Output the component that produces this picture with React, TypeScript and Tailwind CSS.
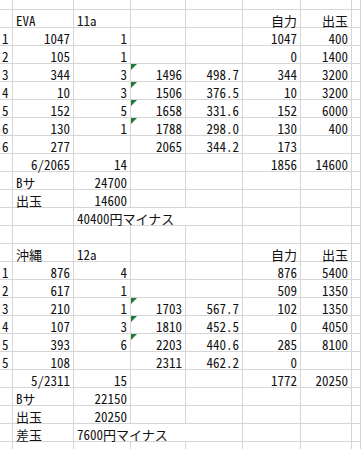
import React from 'react';

// null = covered by the cell on its left (text overflowing into the next column)
const rows: (string | null)[][] = [
  ['', 'EVA', '11a', '', '', '自力', '出玉'],
  ['1', '1047', '1', '', '', '1047', '400'],
  ['2', '105', '1', '', '', '0', '1400'],
  ['3', '344', '3', '1496', '498.7', '344', '3200'],
  ['4', '10', '3', '1506', '376.5', '10', '3200'],
  ['5', '152', '5', '1658', '331.6', '152', '6000'],
  ['6', '130', '1', '1788', '298.0', '130', '400'],
  ['6', '277', '', '2065', '344.2', '173', ''],
  ['', '6/2065', '14', '', '', '1856', '14600'],
  ['', 'Bサ', '24700', '', '', '', ''],
  ['', '出玉', '14600', '', '', '', ''],
  ['', '', '40400円マイナス', null, '', '', ''],
  ['', '', '', '', '', '', ''],
  ['', '沖縄', '12a', '', '', '自力', '出玉'],
  ['1', '876', '4', '', '', '876', '5400'],
  ['2', '617', '1', '', '', '509', '1350'],
  ['3', '210', '1', '1703', '567.7', '102', '1350'],
  ['4', '107', '3', '1810', '452.5', '0', '4050'],
  ['5', '393', '6', '2203', '440.6', '285', '8100'],
  ['5', '108', '', '2311', '462.2', '0', ''],
  ['', '5/2311', '15', '', '', '1772', '20250'],
  ['', 'Bサ', '22150', '', '', '', ''],
  ['', '出玉', '20250', '', '', '', ''],
  ['', '差玉', '7600円マイナス', null, '', '', ''],
];

// rows whose D cell carries the green "number stored as text" marker
const flagged = new Set([3, 4, 5, 6, 16, 17, 18]);

function alignOf(col: number, text: string) {
  if (col === 0) return 'justify-start pl-[2px]';
  if (/^[\d./]+$/.test(text)) return 'justify-end pr-[3px]';
  if (col >= 5) return 'justify-end pr-[3px]';
  return 'justify-start pl-[3px]';
}

function EmptyRow({ h }: { h: string }) {
  return (
    <>
      {Array.from({ length: 8 }).map((_, i) => (
        <div key={i} className={`${h} border-r border-b border-[#d6d6d6]`} />
      ))}
    </>
  );
}

export default function App() {
  return (
    <div className="w-[361px] h-[449px] overflow-hidden bg-white text-[13px] text-[#111] font-['Noto_Sans_CJK_JP',sans-serif] [font-feature-settings:'hwid']">
      <div className="grid grid-cols-[13px_61px_57px_55px_57px_58px_51px_1fr]">
        <EmptyRow h="h-[10px]" />
        {rows.map((row, r) => (
          <React.Fragment key={r}>
            {row.map((cell, c) => {
              if (cell === null) return null;
              const span = row[c + 1] === null;
              return (
                <div
                  key={c}
                  className={`relative h-[18px] flex items-end leading-[13px] whitespace-nowrap border-b border-[#d6d6d6] ${span ? 'col-span-2' : 'border-r'} ${alignOf(c, cell)}`}
                >
                  {c === 3 && flagged.has(r) && (
                    <span className="absolute left-0 top-0 w-0 h-0 border-t-[6px] border-r-[6px] border-t-[#1f7a35] border-r-transparent" />
                  )}
                  {cell}
                </div>
              );
            })}
            <div className="h-[18px] border-r border-b border-[#d6d6d6]" />
          </React.Fragment>
        ))}
        <EmptyRow h="h-[10px]" />
      </div>
    </div>
  );
}
